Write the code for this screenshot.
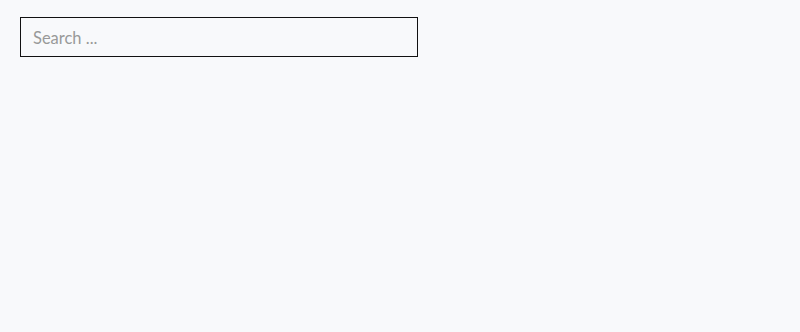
import React from "react";

export default function App() {
  return (
    <div className="min-h-[332px] w-full bg-[#f8f9fb] pt-[17px] pl-[20px] font-['Lato','Noto_Sans',sans-serif]">
      <input
        type="text"
        placeholder="Search ..."
        className="block h-[40px] w-[398px] border border-[#111] bg-[#f8f9fb] px-[12px] pt-[2px] font-['Lato','Noto_Sans',sans-serif] text-[16.5px] text-[#333] placeholder:text-[#999] outline-none"
      />
    </div>
  );
}
